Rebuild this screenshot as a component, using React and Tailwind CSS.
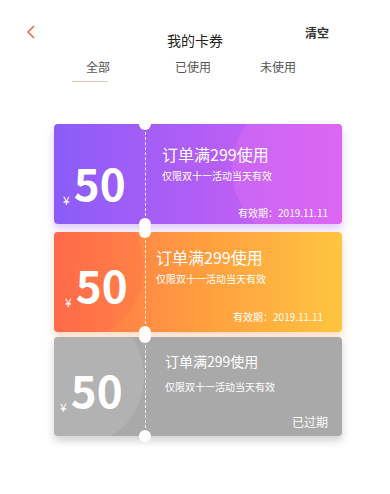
const font = { fontFamily: '"Noto Sans CJK SC", "Noto Sans", sans-serif' };

const coupons = [
  {
    bg: 'bg-gradient-to-r from-[#8a5cf8] via-[#b15ef5] to-[#d95ff2]',
    shadow: 'shadow-[0_5px_8px_rgba(170,100,250,0.35)]',
    glow: 'bg-[#e070f6]/40',
    glowPos: 'right-[-40px] top-[-30px] w-[150px] h-[150px]',
    left: 'pl-[9px] pb-[20px]',
    titlePad: 'pl-[16px] pt-[19px]',
    title: 'text-[16px]',
    sub: 'mt-[4px]',
    footer: '有效期：2019.11.11',
    footerCls: 'text-[10px] pb-[4px] pr-0',
    h: 'h-[100px]',
  },
  {
    bg: 'bg-gradient-to-r from-[#ff6d4a] via-[#ff9d3f] to-[#ffc53f]',
    shadow: 'shadow-[0_5px_8px_rgba(255,150,80,0.35)]',
    glow: 'bg-[#ff5a4a]/20',
    glowPos: 'left-[-60px] top-[-40px] w-[150px] h-[150px]',
    left: 'pl-[11px] pb-[26px]',
    titlePad: 'pl-[10px] pt-[14px]',
    title: 'text-[16px]',
    sub: 'mt-[4px]',
    footer: '有效期：2019.11.11',
    footerCls: 'text-[10px] pb-[8px] mr-[5px]',
    h: 'h-[100px]',
  },
  {
    bg: 'bg-[#a9a9a9]',
    shadow: 'shadow-[0_5px_8px_rgba(0,0,0,0.18)]',
    glow: 'bg-white/10',
    glowPos: 'left-[-50px] top-[-30px] w-[140px] h-[140px]',
    left: 'pl-[6px] pb-[25px]',
    titlePad: 'pl-[19px] pt-[13px]',
    title: 'text-[14px]',
    sub: 'mt-[8px]',
    footer: '已过期',
    footerCls: 'text-[12px] pb-[5px]',
    h: 'h-[99px]',
  },
];

function Coupon({ c }) {
  return (
    <div className={`relative w-[288px] ${c.h} rounded-[4px] ${c.bg} ${c.shadow} text-white flex`}>
      <div className="absolute inset-0 overflow-hidden rounded-[4px]">
        <div className={`absolute rounded-full ${c.glow} ${c.glowPos}`} />
      </div>
      <div className={`relative w-[91px] shrink-0 flex items-end ${c.left}`}>
        <span className="text-[12px] mr-[4px] leading-[12px] mb-[-2px]">¥</span>
        <span className="text-[44px] font-bold leading-none">50</span>
      </div>
      <div className="relative w-0 border-l border-dashed border-white/80 my-[8px]" />
      <div className={`relative flex-1 flex flex-col ${c.titlePad} pr-[14px]`}>
        <div className={`${c.title} leading-[22px]`}>订单满299使用</div>
        <div className={`text-[10px] leading-[14px] ${c.sub}`}>仅限双十一活动当天有效</div>
        <div className={`mt-auto self-end ${c.footerCls}`}>{c.footer}</div>
      </div>
      <div className="absolute left-[85px] top-[-6px] w-[12px] h-[12px] rounded-full bg-white" />
      <div className="absolute left-[85px] bottom-[-6px] w-[12px] h-[12px] rounded-full bg-white" />
    </div>
  );
}

export default function App() {
  return (
    <div className="w-[390px] h-[494px] bg-white overflow-hidden" style={font}>
      <div className="relative h-[52px]">
        <svg className="absolute left-[26px] top-[25px]" width="10" height="14" viewBox="0 0 10 14">
          <path d="M8 1 L2 7 L8 13" fill="none" stroke="#d9674b" strokeWidth="1.5" />
        </svg>
        <div className="absolute left-0 right-0 top-[31px] text-center text-[14px] text-[#222] leading-[18px]">我的卡券</div>
        <div className="absolute left-[305px] top-[24px] text-[12px] text-[#333] font-semibold leading-[18px]">清空</div>
      </div>
      <div className="flex h-[30px] text-[12px] text-[#555]">
        <div className="ml-[72px] w-[36px] flex flex-col">
          <div className="pl-[14px] mt-[6px] leading-[18px] whitespace-nowrap">全部</div>
          <div className="mt-[5px] h-px bg-[#e9c4b0]" />
        </div>
        <div className="ml-[67px] pt-[6px] leading-[18px]">已使用</div>
        <div className="ml-[49px] pt-[6px] leading-[18px]">未使用</div>
      </div>
      <div className="flex flex-col pl-[54px] pt-[42px]">
        <Coupon c={coupons[0]} />
        <div className="h-[8px]" />
        <Coupon c={coupons[1]} />
        <div className="h-[5px]" />
        <Coupon c={coupons[2]} />
      </div>
    </div>
  );
}
